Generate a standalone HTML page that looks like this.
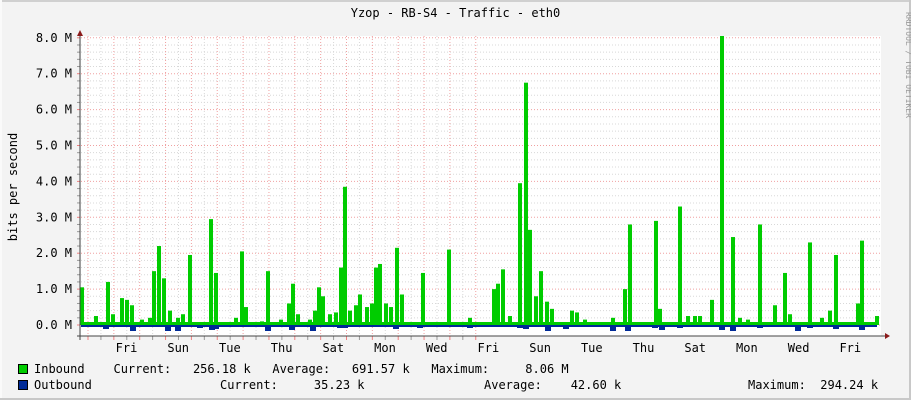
<!DOCTYPE html>
<html><head><meta charset="utf-8"><style>
html,body{margin:0;padding:0}
body{width:911px;height:400px;background:#f3f3f3;position:relative;overflow:hidden;font-family:"DejaVu Sans Mono","Liberation Mono",monospace;font-size:12px;color:#000}
.t{position:absolute;white-space:pre;line-height:14px}
</style></head><body>
<div style="position:absolute;left:0;top:0;width:911px;height:2px;background:#d0d0d0"></div>
<div style="position:absolute;left:0;top:0;width:2px;height:400px;background:#fafafa"></div>
<div style="position:absolute;right:0;top:0;width:2px;height:400px;background:#c8c8c8"></div>
<div style="position:absolute;left:0;bottom:0;width:911px;height:2px;background:#c8c8c8"></div>
<svg id="g" width="911" height="400" style="position:absolute;left:0;top:0"></svg>
<div class="t" style="left:0;width:911px;text-align:center;top:6px">Yzop - RB-S4 - Traffic - eth0</div>
<div class="t" style="left:-42px;top:180px;transform:rotate(-90deg);width:110px;text-align:center">bits per second</div>
<div class="t" style="left:858px;top:55px;transform:rotate(90deg);font-size:8px;color:#999;width:100px;text-align:center">RRDTOOL / TOBI OETIKER</div>
<div class="t" style="left:34px;top:362px">Inbound    Current:   256.18 k   Average:   691.57 k   Maximum:     8.06 M</div>
<div class="t" style="left:34px;top:378px">Outbound</div>
<div class="t" style="left:220px;top:378px">Current:     35.23 k</div>
<div class="t" style="left:484px;top:378px">Average:    42.60 k</div>
<div class="t" style="left:748px;top:378px">Maximum:  294.24 k</div>
<div style="position:absolute;left:18px;top:364px;width:8px;height:8px;background:#00cc00;border:1px solid #000"></div>
<div style="position:absolute;left:18px;top:380px;width:8px;height:8px;background:#002a97;border:1px solid #000"></div>
<script>
var s='',L=81,R=881,T=36,Z=325,U=35.9;
function y(v){return Z-v*U}
s+='<rect x="'+L+'" y="'+T+'" width="'+(R-L)+'" height="'+(336-T)+'" fill="#fff"/>';
for(var v=0;v<=8.01;v+=0.2){var yy=y(v),maj=Math.abs(v-Math.round(v))<0.01;
s+='<line x1="'+L+'" x2="'+R+'" y1="'+yy+'" y2="'+yy+'" stroke="'+(maj?'#f0a0a0':'#d8d8d8')+'" stroke-dasharray="1,2"/>';
s+='<line x1="77" x2="80" y1="'+yy+'" y2="'+yy+'" stroke="'+(maj?'#f08080':'#999')+'"/>';}
for(var i=0;i<31;i++){var x=88+i*12.925,maj=i%2==0;if(x>R)break;
s+='<line x1="'+x+'" x2="'+x+'" y1="'+T+'" y2="336" stroke="'+(maj?'#f0a0a0':'#d8d8d8')+'" stroke-dasharray="1,2"/>';
s+='<line x1="'+x+'" x2="'+x+'" y1="336" y2="340" stroke="'+(maj?'#f08080':'#999')+'"/>';}
var yl=['0.0','1.0','2.0','3.0','4.0','5.0','6.0','7.0','8.0'];
for(var k=0;k<9;k++)s+='<text x="72" y="'+(y(k)+4)+'" text-anchor="end" font-family="DejaVu Sans Mono,monospace" font-size="12">'+yl[k]+' M</text>';
var d=['Fri','Sun','Tue','Thu','Sat','Mon','Wed','Fri','Sun','Tue','Thu','Sat','Mon','Wed','Fri'];
for(var k=0;k<d.length;k++)s+='<text x="'+(126.5+k*51.7)+'" y="352" text-anchor="middle" font-family="DejaVu Sans Mono,monospace" font-size="12">'+d[k]+'</text>';
s+='<rect x="'+L+'" y="'+(Z-3)+'" width="'+(R-L-4)+'" height="3" fill="#00cc00"/>';
var p=[[82,1.05],[96,.25],[108,1.2],[113,.3],[122,.75],[127,.7],[132,.55],[142,.15],[150,.2],[154,1.5],[159,2.2],[164,1.3],[170,.4],[178,.2],[183,.3],[190,1.95],[211,2.95],[216,1.45],[236,.2],[242,2.05],[246,.5],[262,.1],[268,1.5],[281,.15],[289,.6],[293,1.15],[298,.3],[310,.15],[315,.4],[319,1.05],[323,.8],[330,.3],[336,.35],[341,1.6],[345,3.85],[350,.4],[356,.55],[360,.85],[367,.5],[372,.6],[376,1.6],[380,1.7],[386,.6],[391,.5],[397,2.15],[402,.85],[423,1.45],[449,2.1],[470,.2],[494,1.0],[498,1.15],[503,1.55],[510,.25],[520,3.95],[526,6.75],[530,2.65],[536,.8],[541,1.5],[547,.65],[552,.45],[572,.4],[577,.35],[585,.15],[613,.2],[625,1.0],[630,2.8],[656,2.9],[660,.45],[680,3.3],[688,.25],[695,.25],[700,.25],[712,.7],[722,8.05],[733,2.45],[740,.2],[748,.15],[760,2.8],[775,.55],[785,1.45],[790,.3],[810,2.3],[822,.2],[830,.4],[836,1.95],[858,.6],[862,2.35],[877,.25]];
p.forEach(function(a){s+='<rect x="'+(a[0]-2)+'" y="'+y(a[1])+'" width="4" height="'+(a[1]*U)+'" fill="#00cc00"/>';});
s+='<rect x="'+L+'" y="'+Z+'" width="'+(R-L-4)+'" height="2" fill="#002a97"/>';
[106,133,168,178,200,212,216,268,292,313,340,345,396,420,470,520,526,548,566,613,628,655,662,680,722,733,760,798,810,836,862].forEach(function(x){s+='<rect x="'+(x-3)+'" y="'+Z+'" width="6" height="'+(3+(x%5))+'" fill="#002a97"/>';});
s+='<line x1="80" x2="80" y1="'+(T-4)+'" y2="340" stroke="#444"/>';
s+='<line x1="77" x2="'+(R+4)+'" y1="336" y2="336" stroke="#444"/>';
s+='<polygon points="77,36 83,36 80,30" fill="#8b1a1a"/>';
s+='<polygon points="'+(R+4)+',333 '+(R+4)+',339 '+(R+9)+',336" fill="#8b1a1a"/>';
document.getElementById('g').innerHTML=s;
</script>
</body></html>
